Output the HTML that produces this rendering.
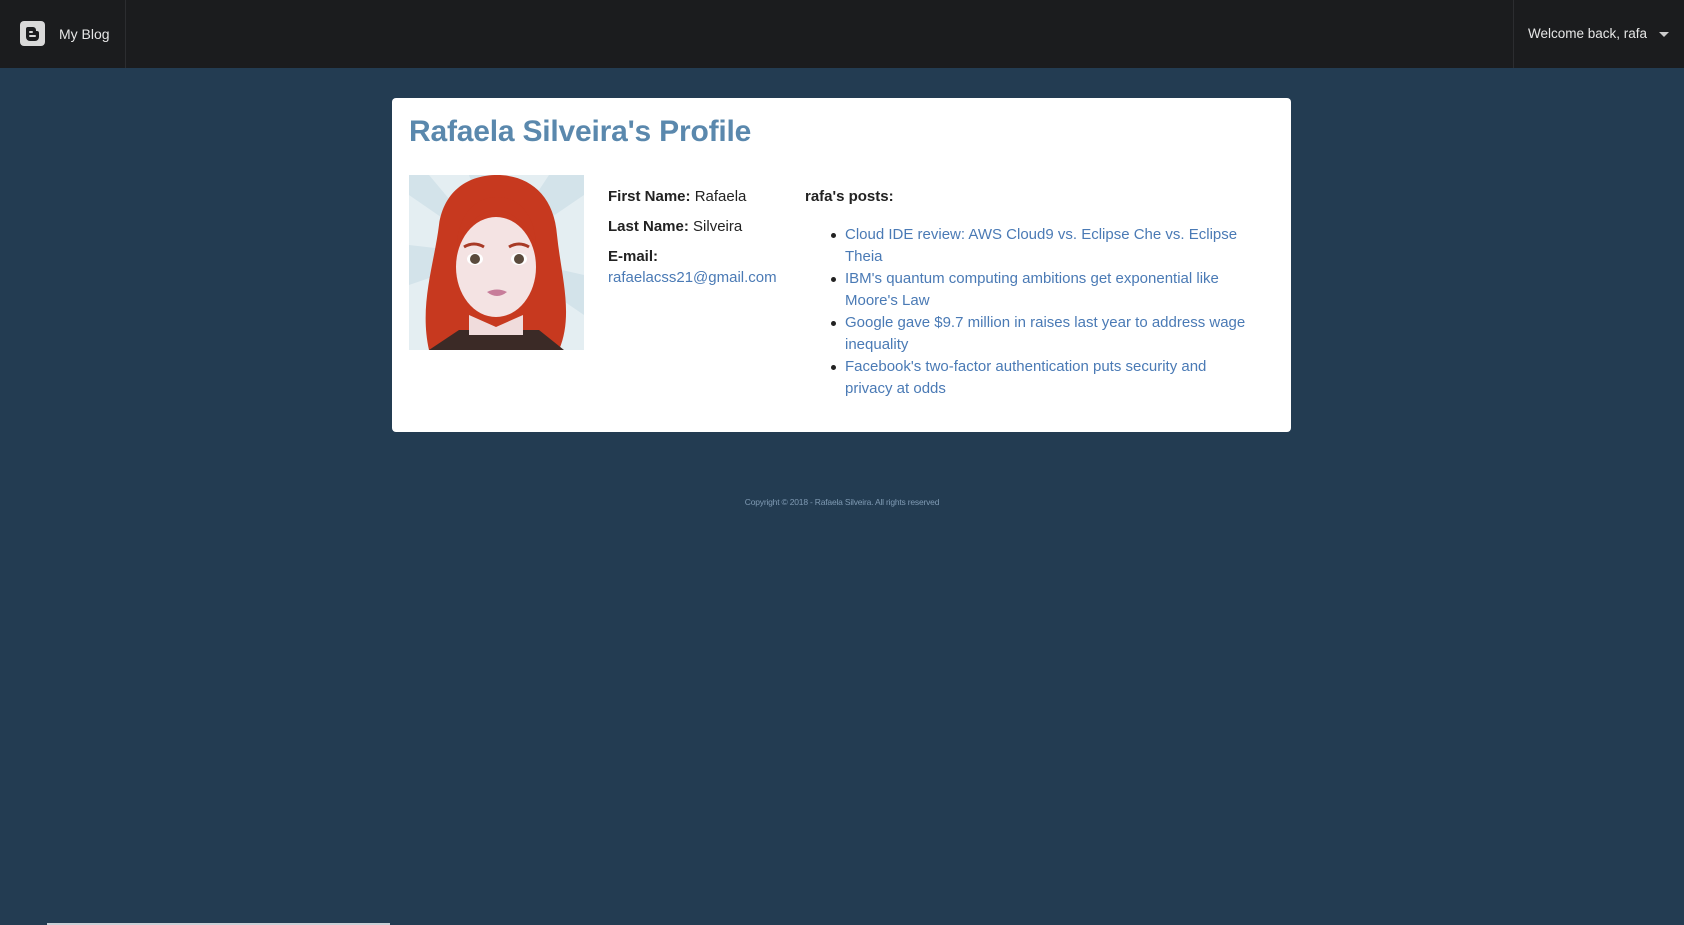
<!DOCTYPE html>
<html><head><meta charset="utf-8">
<style>
*{margin:0;padding:0;box-sizing:border-box}
body{width:1684px;height:925px;background:#233c52;font-family:"Liberation Sans",sans-serif;position:relative;overflow:hidden}
.nav{position:absolute;left:0;top:0;width:1684px;height:68px;background:#1b1c1e}
.div1{position:absolute;left:125px;top:0;width:1px;height:68px;background:#2c2d30}
.div2{position:absolute;left:1513px;top:0;width:1px;height:68px;background:#2c2d30}
.logo{position:absolute;left:20px;top:21px;width:25px;height:25px;background:#d9d9d9;border-radius:4px}
.brand{position:absolute;left:59px;top:26px;color:#e6e6e6;font-size:14px}
.welcome{position:absolute;left:1528px;top:26px;color:#e6e6e6;font-size:13.5px}
.caret{position:absolute;left:1659px;top:32px;width:0;height:0;border-left:5px solid transparent;border-right:5px solid transparent;border-top:5px solid #ccc}
.card{position:absolute;left:392px;top:98px;width:899px;height:334px;background:#fff;border-radius:4px}
h1{position:absolute;left:409px;top:115px;color:#5a88ad;font-size:30px;font-weight:bold;letter-spacing:-0.2px}
.av{position:absolute;left:409px;top:175px;width:175px;height:175px}
.t{position:absolute;font-size:15px;color:#222;line-height:22px;white-space:nowrap}
.t b{color:#222}
a{color:#4a7ab5;text-decoration:none}
ul{position:absolute;left:845px;top:224px;font-size:15px;line-height:22px;list-style:none;white-space:nowrap}
li{position:relative}
li:before{content:"";position:absolute;left:-14px;top:9px;width:5px;height:5px;border-radius:50%;background:#222}
.foot{position:absolute;left:0;width:1684px;top:497px;text-align:center;color:#7f9ab3;font-size:8.5px;letter-spacing:-0.2px}
.strip{position:absolute;left:47px;top:923px;width:343px;height:2px;background:#c9d0d6}
</style></head><body>
<div class="nav">
<div class="logo"><svg width="25" height="25" viewBox="0 0 25 25"><path d="M8 6h5a3 3 0 0 1 3 3v1h1a2 2 0 0 1 2 2v4a4 4 0 0 1-4 4H10a4 4 0 0 1-4-4V8a2 2 0 0 1 2-2z" fill="#1b1c1e"/><rect x="9" y="10" width="4" height="2" rx="1" fill="#d9d9d9"/><rect x="9" y="14" width="7" height="2" rx="1" fill="#d9d9d9"/></svg></div>
<div class="brand">My Blog</div>
<div class="div1"></div><div class="div2"></div>
<div class="welcome">Welcome back, rafa</div>
<div class="caret"></div>
</div>
<div class="card"></div>
<h1>Rafaela Silveira's Profile</h1>
<svg class="av" viewBox="0 0 175 175">
<rect width="175" height="175" fill="#e4eef2"/>
<g fill="#d3e3ea"><path d="M87 80L0 20V0h20z"/><path d="M87 80L60 0h30z"/><path d="M87 80L140 0h35v20z"/><path d="M87 80L175 100v40z"/><path d="M87 80L0 110V70z"/></g>
<path d="M20 175C10 130 25 90 30 50 35 15 60 0 88 0 120 0 145 20 148 60 152 100 165 140 150 175z" fill="#c7391f"/>
<path d="M20 175l30-20h80l25 20z" fill="#3b2a26"/>
<path d="M60 140l27 12 27-12v20H60z" fill="#f0dcdc"/>
<ellipse cx="87" cy="92" rx="40" ry="50" fill="#f4e3e3"/>
<path d="M48 70C50 35 70 22 88 22 110 22 126 40 127 70 115 45 100 35 88 35 70 35 58 50 48 70z" fill="#c7391f"/>
<path d="M55 72q10-6 20 0M100 72q10-6 20 0" stroke="#a83a26" stroke-width="3" fill="none"/>
<ellipse cx="66" cy="84" rx="8" ry="6" fill="#fff"/><circle cx="66" cy="84" r="5" fill="#5a4a3c"/>
<ellipse cx="110" cy="84" rx="8" ry="6" fill="#fff"/><circle cx="110" cy="84" r="5" fill="#5a4a3c"/>
<path d="M78 117q10-5 20 0q-10 8-20 0z" fill="#c77d9a"/>
</svg>
<div class="t" style="left:608px;top:186px"><b>First Name:</b> Rafaela</div>
<div class="t" style="left:608px;top:216px"><b>Last Name:</b> Silveira</div>
<div class="t" style="left:608px;top:246px"><b>E-mail:</b></div>
<div class="t" style="left:608px;top:267px"><a>rafaelacss21@gmail.com</a></div>
<div class="t" style="left:805px;top:186px"><b>rafa's posts:</b></div>
<ul>
<li><a>Cloud IDE review: AWS Cloud9 vs. Eclipse Che vs. Eclipse<br>Theia</a></li>
<li><a>IBM's quantum computing ambitions get exponential like<br>Moore's Law</a></li>
<li><a>Google gave $9.7 million in raises last year to address wage<br>inequality</a></li>
<li><a>Facebook's two-factor authentication puts security and<br>privacy at odds</a></li>
</ul>
<div class="foot">Copyright © 2018 - Rafaela Silveira. All rights reserved</div>
<div class="strip"></div>
</body></html>
